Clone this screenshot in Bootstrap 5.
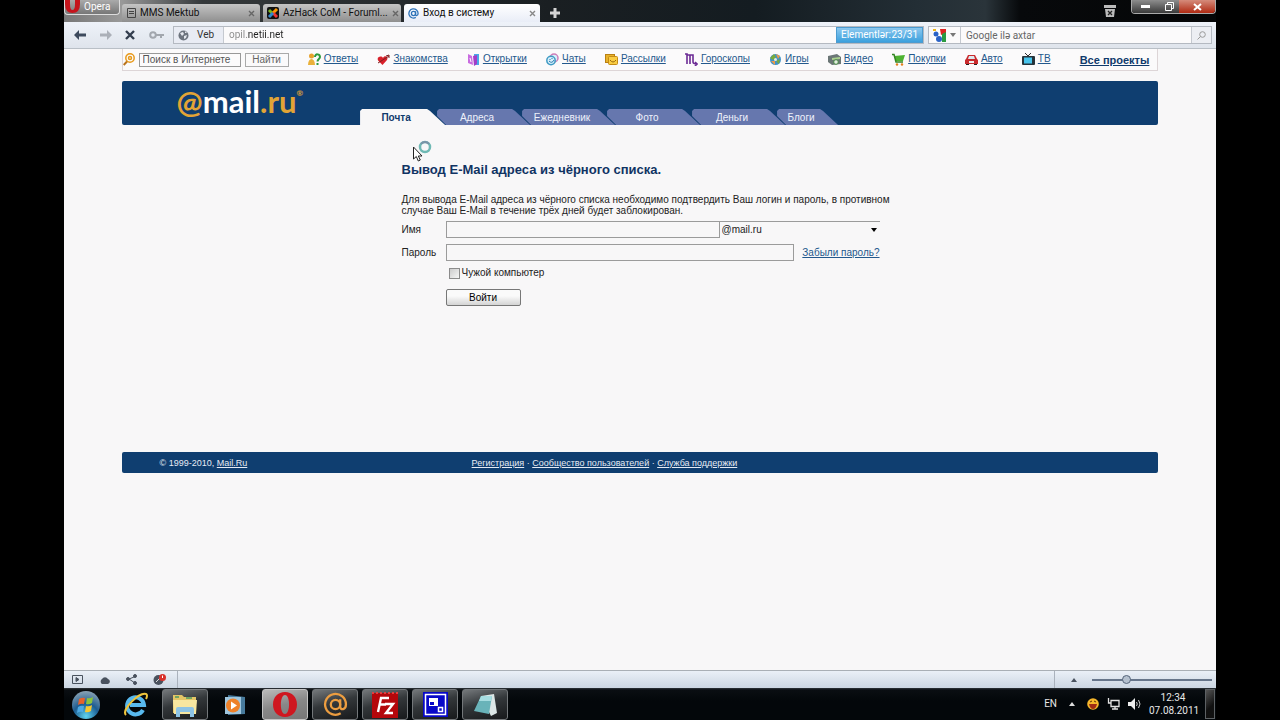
<!DOCTYPE html>
<html lang="ru">
<head>
<meta charset="utf-8">
<meta name="viewport" content="width=device-width, initial-scale=1">
<title>Вход в систему</title>
<link href="https://cdn.jsdelivr.net/npm/bootstrap@5.3.0/dist/css/bootstrap.min.css" rel="stylesheet">
<style>
body{background:#000;font-family:"Liberation Sans",Arial,sans-serif;font-size:10px;line-height:12px;color:#222;padding:0 5%}
svg{display:block;flex:none}
button{font:inherit;padding:0;border:0;background:none}
input,select{font:inherit;min-width:0;border-radius:0}
.chrome-ui{font-family:Roboto,"Noto Sans",sans-serif}
/* tab strip */
.strip{height:22px;background:linear-gradient(90deg,#777 0,#999 5%,#35393b 12%,#1a1f22 42%,#141c21 60%,#232e35 74%,#2a343a 80%,#07090b 83%,#050607);gap:3px}
.opera-btn{width:56px;height:15px;background:linear-gradient(#aaa,#777);border:1px solid #ddd;border-top:0;border-radius:0 0 4px 4px;color:#fff;align-self:flex-start;margin-right:-1px}
.wtab{width:138px;height:18px;background:linear-gradient(#c4c4c4,#8f8f8f);border-radius:3px 3px 0 0;padding:0 5px;color:#111}
.wtab.on{width:136px;background:linear-gradient(#fff,#e9edf7)}
.plus{padding:4px 4px 4px 7px}
.winctl{height:14px;border:1px solid #aaa;border-top:0;border-radius:0 0 4px 4px;overflow:hidden}
.winctl button{width:27px;background:linear-gradient(#8d8d8d,#3a3a3a);color:#fff}
.winctl .shut{width:36px;background:linear-gradient(#d58b7b,#b02a12)}
.winctl .restore{width:20px}
/* address bar */
.addr{height:27px;background:linear-gradient(#eef2f9,#dfe4ec);border-bottom:1px solid #b9bfc6}
.navs{width:109px;padding:0 9px 0 10px}
.field{height:18px;border:1px solid #b4b9c1;background:#fbfafb}
.veb{width:50px;background:#e9ecf4;border-right:1px solid #c5c9d0;color:#333}
.url{border:0;outline:0;padding:0 5px;background:linear-gradient(90deg,#8a8a8a 24px,#222 24px);-webkit-background-clip:text;background-clip:text;color:transparent}
.elem{width:87px;background:linear-gradient(#8cc8ef,#3ba0dd);border:1px solid #4b9bd0;color:#fff}
.finder{width:284px}
.finder input{border:0;border-left:1px solid #c5c9d0;background:transparent;outline:0;padding:0 5px}
.finder input::placeholder{color:#666;opacity:1}
.go{width:20px;background:#eceef3;border-left:1px solid #c5c9d0}
/* page */
.sheet{background:#f8f7f8;padding:0 5%}
.portal{height:22px;background:#fbfafb;border:1px solid #ddd5d7;border-top:0;padding:0 8px 0 0}
.portal a,.forgot{color:#23588c;text-decoration:underline}
.portal .gap-1{gap:3px!important}
.portal .all{color:#103a6c;margin-left:10px;font-size:11px}
.find-in{width:102px;height:14px;border:1px solid #999;background:#fcfbfc;padding:0 3px}
.find-in::placeholder{color:#555;opacity:1}
.find-btn{width:44px;height:14px;border:1px solid #aaa;color:#666;line-height:12px}
.top{height:44px;background:#0f3e70;border-radius:2px;margin-top:10px}
.brand{width:23%;padding-left:55px;font-family:Lato,sans-serif;font-size:31px;line-height:41px;font-weight:700;color:#fff;text-decoration:none}
.brand span{color:#e2a436}
.brand sup{font-size:8px;top:-17px;color:#e2a436}
.ptab{width:93px;height:16px;margin-right:-8px;padding-right:13px;background:#6677ae;color:#eef1fb;text-decoration:none;text-align:center;line-height:17px;clip-path:polygon(2px 0,calc(100% - 18px) 0,calc(100% - 15px) 2px,100% 100%,9px 100%,0 7px,0 2px)}
.ptab.on{width:85px;background:#f8f7f8;color:#103a6c;font-weight:700;clip-path:polygon(2px 0,calc(100% - 18px) 0,calc(100% - 15px) 2px,100% 100%,0 100%,0 2px)}
.ptab.last{width:61px}
.content{margin-left:27%;width:478px;max-width:73%;padding-top:37px}
h1{font-size:13px;line-height:16px;font-weight:700;color:#103363;margin:0 0 16px}
.pointer{left:10px;top:-22px}
.note{line-height:11px;margin:0 0 5px;white-space:nowrap}
.line{margin-bottom:6px}
.lab{width:44px}
.tin{height:17px;border:1px solid #9b9b9b;background:transparent}
.dom{width:160px;height:17px;border:0;border-top:1px solid #9b9b9b;appearance:none;color:#222;padding:0 2px;background:transparent url("data:image/svg+xml,%3Csvg xmlns='http://www.w3.org/2000/svg' width='6' height='4'%3E%3Cpath d='M0 0h6L3 4z'/%3E%3C/svg%3E") no-repeat right 3px center}
.chk{appearance:none;width:11px;height:11px;border:1px solid #8b8b8b;background:linear-gradient(135deg,#ccc,#f6f6f6);margin:0 2px 0 47px}
.enter{width:75px;height:17px;margin:10px 0 0 44px;border:1px solid #777;border-radius:2px;background:linear-gradient(#fafafa 40%,#d4d4d4)}
.foot{height:21px;background:#0f3e70;border-radius:2px;color:#e6ebf4;margin-top:146px;font-size:9px}
.foot a{color:inherit}
.foot .copy{width:350px;padding-left:38px}
/* status bar and taskbar */
.status{height:18px;background:linear-gradient(#eaf0f7,#ccd6e2);border-top:1px solid #a9afb5}
.status .tools{width:114px;gap:15px;padding-left:7px;border-right:1px solid #aab2bc}
.zoomer{width:162px;border-left:1px solid #aab2bc}
.zoomer input{appearance:none;width:120px;height:2px;background:#66758a}
.zoomer input::-webkit-slider-thumb{appearance:none;width:9px;height:9px;border-radius:50%;border:1px solid #56657a;background:#b4c0ce}
.task{height:32px;background:linear-gradient(#30363b 0,#0a0e12 2px,#03070a 40%);color:#e8e8e8;gap:4px}
.tb{width:46px;height:31px;border-radius:3px}
.tb.start{width:44px}
.tb.open{border:1px solid #73777a;background:linear-gradient(165deg,#75797c,#33373a 45%,#17191b)}
.tb.now{border:1px solid #c4c4c4;background:linear-gradient(165deg,#bbb,#888 50%,#777)}
.clock{width:48px;text-align:center;line-height:13px}
.desk{width:10px;height:30px;border:1px solid #5d6164;background:linear-gradient(135deg,#555,#111 60%);margin-right:1px}
</style>
</head>
<body class="d-flex flex-column min-vh-100">
<header class="chrome-ui">
  <div class="strip d-flex align-items-end">
    <button class="opera-btn d-flex align-items-center gap-1">
      <svg width="15" height="14" viewBox="0 0 15 14"><path fill="#c5141c" fill-rule="evenodd" d="M0-6h15v10q0 9-7.500 9T0 4zM5-6v10q0 6 2.500 6T10 4V-6z"/></svg>Opera</button>
    <div class="wtab d-flex align-items-center gap-1"><svg width="9" height="10" viewBox="0 0 9 10" fill="none" stroke="#444"><path d="M.5.5h8v9h-8zM2 3.500h5M2 5.500h5"/></svg><span class="flex-fill">MMS Mektub</span><svg width="7" height="7" viewBox="0 0 7 7" stroke="#666" stroke-width="1.400"><path d="M1 1l5 5M6 1L1 6"/></svg></div>
    <div class="wtab d-flex align-items-center gap-1 px-1"><svg width="12" height="12" viewBox="0 0 12 12"><rect width="12" height="12" rx="2" fill="#111"/><path d="M2 3l3 3" stroke="#7ab51d" stroke-width="3"/><path d="M10 2L6 6" stroke="#f90" stroke-width="3"/><path d="M6 6l4 4" stroke="#e33" stroke-width="3"/><path d="M6 6l-4 4" stroke="#38c" stroke-width="3"/></svg><span class="flex-fill text-nowrap">AzHack CoM - Foruml...</span><svg width="7" height="7" viewBox="0 0 7 7" stroke="#666" stroke-width="1.400"><path d="M1 1l5 5M6 1L1 6"/></svg></div>
    <div class="wtab on d-flex align-items-center gap-1 px-1"><svg width="11" height="11" viewBox="0 0 24 24" fill="none" stroke="#2d72b8" stroke-width="2.800"><circle cx="12" cy="12" r="4.500"/><path d="M16.500 7v7c0 4 5.500 3 5.500-2a10 10 0 1 0-5 8.500"/></svg><span class="flex-fill">Вход в систему</span><svg width="7" height="7" viewBox="0 0 7 7" stroke="#888" stroke-width="1.400"><path d="M1 1l5 5M6 1L1 6"/></svg></div>
    <button class="plus" aria-label="Новая вкладка"><svg width="10" height="10" viewBox="0 0 10 10"><path d="M3.500 0h3v3.500H10v3H6.500V10h-3V6.500H0v-3h3.500z" fill="#d4d4d4"/></svg></button>
    <button class="ms-auto align-self-center me-2 pe-1" aria-label="Закрытые вкладки"><svg width="12" height="12" viewBox="0 0 12 12"><path d="M0 0h12v3H0zM1 4h10l-1 8H2z" fill="#bbb"/><path d="M4 6l4 4M8 6l-4 4" stroke="#222" stroke-width="1.300"/></svg></button>
    <div class="winctl d-flex align-self-start">
      <button class="d-flex align-items-center justify-content-center" aria-label="Свернуть"><svg width="9" height="3"><path d="M0 0h9v3H0z" fill="#fff"/></svg></button>
      <button class="restore d-flex align-items-center justify-content-center" aria-label="Восстановить"><svg width="9" height="9" fill="none" stroke="#fff"><path d="M2.500 2.500v-2h6v6h-2M.5 2.500h6v6h-6z"/></svg></button>
      <button class="shut d-flex align-items-center justify-content-center" aria-label="Закрыть"><svg width="9" height="8" stroke="#fff" stroke-width="2"><path d="M1 1l7 6M8 1L1 7"/></svg></button>
    </div>
  </div>
  <div class="addr d-flex align-items-center pe-1">
    <div class="navs d-flex align-items-center justify-content-between">
      <button aria-label="Назад"><svg width="12" height="10" viewBox="0 0 12 10"><path d="M0 5l5-5v3.500h7v3H5V10z" fill="#3d4a5d"/></svg></button>
      <button aria-label="Вперёд"><svg width="12" height="10" viewBox="0 0 12 10"><path d="M12 5L7 0v3.500H0v3h7V10z" fill="#abb0b8"/></svg></button>
      <button aria-label="Стоп"><svg width="10" height="10" viewBox="0 0 10 10" stroke="#333e4e" stroke-width="2.400"><path d="M1 1l8 8M9 1L1 9"/></svg></button>
      <button aria-label="Пароли"><svg width="15" height="8" viewBox="0 0 15 8" fill="none" stroke="#a2a7ae" stroke-width="2"><circle cx="4" cy="4" r="2.800"/><path d="M7 4h8M12 4v3"/></svg></button>
    </div>
    <div class="field d-flex flex-fill me-1">
      <button class="veb d-flex align-items-center gap-2 ps-1"><svg width="11" height="11" viewBox="0 0 11 11"><circle cx="5.500" cy="5.500" r="5" fill="#6d747e"/><path d="M2 3l3-1 1 2-2 2zM6 6l3-1-1 3-2 1zM7 1l2 2-2 0z" fill="#e5e8ee"/></svg>Veb</button>
      <input class="url flex-fill" aria-label="Адрес" value="opil.netii.net">
      <div class="elem d-flex justify-content-between align-items-center ps-1 pe-1"><span>Elementlər:</span><span>23/31</span></div>
    </div>
    <div class="field finder d-flex align-items-center">
      <button class="d-flex align-items-center px-1 gap-1" aria-label="Поисковая система"><svg width="13" height="13" viewBox="0 0 13 13"><path fill="#fff" d="M0 0h13v13H0z"/><path d="M7 0h6v4L8 6z" fill="#d22"/><path d="M9 5l4-2v10H9z" fill="#2a9a41"/><circle cx="3" cy="5" r="2.500" fill="#2b63c6"/><circle cx="6" cy="10" r="3" fill="#2b63c6"/><path d="M0 0h3v2H0z" fill="#ecb41a"/></svg><svg width="6" height="4"><path d="M0 0h6L3 4z" fill="#777"/></svg></button>
      <input class="flex-fill h-100" placeholder="Google ilə axtar" aria-label="Google">
      <button class="go h-100 d-flex align-items-center justify-content-center" aria-label="Искать"><svg width="9" height="9" viewBox="0 0 9 9" fill="none" stroke="#999"><circle cx="5.500" cy="3.500" r="2.800"/><path d="M3.500 5.500L.5 8.500"/></svg></button>
    </div>
  </div>
</header>

<main class="sheet flex-fill">
  <nav class="portal d-flex align-items-center justify-content-between">
    <form class="d-flex align-items-center">
      <svg class="me-1" width="12" height="13" viewBox="0 0 12 13" fill="none" stroke="#e89a1c" stroke-width="1.500"><circle cx="7" cy="5" r="4.200"/><circle cx="7" cy="5" r="1.500"/><path d="M4 8.500L.7 12" stroke="#b9731c" stroke-width="2"/></svg>
      <input class="find-in me-1" placeholder="Поиск в Интернете" aria-label="Поиск в Интернете"><button type="button" class="find-btn">Найти</button>
    </form>
    <div class="d-flex gap-1"><svg width="13" height="13" viewBox="0 0 13 13"><circle cx="3.500" cy="3" r="2.500" fill="#e7a22c"/><path d="M0 12c0-8 7-8 7 0z" fill="#e9b13a"/><path d="M7 4c0-4 5-3 5 0 0 2-2.500 2-2.500 4.500M9.500 10v2" fill="none" stroke="#2d9a3b" stroke-width="2"/></svg><a href="#">Ответы</a></div>
    <div class="d-flex gap-1"><svg width="13" height="13" viewBox="0 0 13 13"><path d="M5.500 12L1.500 8c-3-4 3-6 4.500-3 1-3 6-2 4 2z" fill="#d8202a"/><path d="M1 10l11-7M9 3l3-1v3" fill="none" stroke="#7c2020"/></svg><a href="#">Знакомства</a></div>
    <div class="d-flex gap-1"><svg width="13" height="13" viewBox="0 0 13 13"><path d="M7 1h5v11H7z" fill="#49a9e8"/><path d="M1 1l4 2 1 9-5-2z" fill="#c96be0"/><path d="M6 3l4-1v9l-3 2z" fill="#a33dc7"/><path d="M3 5l1 4" stroke="#fff"/></svg><a href="#">Открытки</a></div>
    <div class="d-flex gap-1"><svg width="13" height="13" viewBox="0 0 13 13" fill="#d8effa"><circle cx="8" cy="5" r="4" stroke="#cf7db8" stroke-width="1.500"/><circle cx="5" cy="7.500" r="4.200" stroke="#3f9ac4" stroke-width="1.500"/><path d="M3 8q3 3 5-1M4 6v1M6 5v1" fill="none" stroke="#277bb0"/></svg><a href="#">Чаты</a></div>
    <div class="d-flex gap-1"><svg width="13" height="13" viewBox="0 0 13 13"><rect x=".5" y="1.500" width="9" height="8" fill="#e8b22a" stroke="#b98014"/><rect x="3.500" y="3.500" width="9" height="8" rx="1" fill="#f9cc43" stroke="#c48a16"/><path d="M5 7q3 4 6 0" fill="none" stroke="#9b6a0f"/></svg><a href="#">Рассылки</a></div>
    <div class="d-flex gap-1"><svg width="13" height="13" viewBox="0 0 13 13" fill="none" stroke="#6b2a94" stroke-width="1.600"><path d="M0 1h2v10M2 2h3v9M5 2h3v7q0 2 4 2M10 9l2 2-2 2"/></svg><a href="#">Гороскопы</a></div>
    <div class="d-flex gap-1"><svg width="13" height="13" viewBox="0 0 13 13"><circle cx="6.500" cy="6.500" r="5.500" fill="#3f93c9"/><path d="M1 5l4-4 2 3-3 3zM7 8l4-2-1 5z" fill="#79ab3c"/><path d="M7 1l4 2-2 3zM2 8l4 0 0 4z" fill="#ec9b48"/><circle cx="6.500" cy="6.500" r="1.500" fill="#e8eddf"/></svg><a href="#">Игры</a></div>
    <div class="d-flex gap-1"><svg width="13" height="13" viewBox="0 0 13 13"><path d="M0 3l9-2 4 3v7l-9 1-4-3z" fill="#6b7676"/><path d="M4 5l8-1v2l-8 1z" fill="#a9d08e"/><circle cx="8" cy="9" r="2.300" fill="#e3eee0" stroke="#478b45"/></svg><a href="#">Видео</a></div>
    <div class="d-flex gap-1"><svg width="13" height="13" viewBox="0 0 13 13"><path d="M2 3l11-1-2 6H4z" fill="#4eb331"/><path d="M0 1.500h2L4 9h7" fill="none" stroke="#348423" stroke-width="1.500"/><circle cx="5" cy="11.500" r="1.200" fill="#e47f1a"/><circle cx="10" cy="11.500" r="1.200" fill="#e47f1a"/></svg><a href="#">Покупки</a></div>
    <div class="d-flex gap-1"><svg width="13" height="13" viewBox="0 0 13 13"><path d="M3 2h7l2 4 1 1v4H0V7l1-1z" fill="#c92a2d"/><path d="M4 3h5l1 3H3z" fill="#dce9ef"/><path d="M1 11h3v1H1zM9 11h3v1H9z" fill="#222"/><path d="M4 8h5v2H4z" fill="#eee"/></svg><a href="#">Авто</a></div>
    <div class="d-flex gap-1"><svg width="13" height="13" viewBox="0 0 13 13"><path d="M3 0l3 3 3-3" fill="none" stroke="#333"/><rect y="3" width="13" height="9" rx="1" fill="#26333a"/><path d="M2 4.500h8v6H2z" fill="#48c4ec"/></svg><a href="#">ТВ</a></div>
    <a href="#" class="all fw-bold">Все проекты</a>
  </nav>

  <div class="top d-flex align-items-end">
    <a href="#" class="brand text-nowrap align-self-start"><span>@</span>mail<span>.ru</span><sup>®</sup></a>
    <nav class="d-flex">
      <a href="#" class="ptab on">Почта</a><a href="#" class="ptab">Адреса</a><a href="#" class="ptab">Ежедневник</a><a href="#" class="ptab">Фото</a><a href="#" class="ptab">Деньги</a><a href="#" class="ptab last">Блоги</a>
    </nav>
  </div>

  <form class="content">
    <h1 class="position-relative">Вывод E-Mail адреса из чёрного списка.
      <svg class="pointer position-absolute" width="22" height="24" viewBox="0 0 22 24"><circle cx="13" cy="7" r="5" fill="none" stroke="#6fb9b4" stroke-width="2.500"/><path d="M9 4a5 5 0 0 1 8 0" fill="none" stroke="#7b93a8" stroke-width="2"/><path d="M1.500 7v12l2.800-2.500 2 4.500 2-1-2-4h3.700z" fill="#fff" stroke="#222"/></svg>
    </h1>
    <p class="note">Для вывода E-Mail адреса из чёрного списка необходимо подтвердить Ваш логин и пароль, в противном<br>случае Ваш E-Mail в течение трёх дней будет заблокирован.</p>
    <div class="line d-flex align-items-center">
      <label class="lab" for="nm">Имя</label><input id="nm" class="tin flex-fill" type="text"><select class="dom" aria-label="Домен"><option>@mail.ru</option></select>
    </div>
    <div class="line d-flex align-items-center">
      <label class="lab" for="pw">Пароль</label><input id="pw" class="tin flex-fill" type="password"><a href="#" class="forgot ps-2">Забыли пароль?</a>
    </div>
    <div class="d-flex align-items-center"><input class="chk" type="checkbox" id="alien"><label for="alien">Чужой компьютер</label></div>
    <button type="button" class="enter d-block">Войти</button>
  </form>

  <footer class="foot d-flex align-items-center">
    <div class="copy">© 1999-2010, <a href="#">Mail.Ru</a></div>
    <div><a href="#">Регистрация</a> · <a href="#">Сообщество пользователей</a> · <a href="#">Служба поддержки</a></div>
  </footer>
</main>

<div class="chrome-ui">
  <div class="status d-flex justify-content-between">
    <div class="tools d-flex align-items-center">
      <button aria-label="Панели"><svg width="13" height="11" fill="none" stroke="#49525e"><path d="M1.500 1.500h10v8h-10z"/><path d="M5 3.500l3 2-3 2z" fill="#49525e"/></svg></button>
      <button aria-label="Opera Link"><svg width="12" height="8"><path d="M3 8a3 3 0 0 1 0-5 3.500 3.500 0 0 1 6 0 2.600 2.600 0 0 1 0 5z" fill="#49525e"/></svg></button>
      <button aria-label="Opera Unite"><svg width="12" height="11" fill="#49525e" stroke="#49525e"><path d="M3 5l5-2M3 5l6 4" /><circle cx="2" cy="5" r="1.500"/><circle cx="9" cy="2" r="1.500"/><circle cx="9" cy="9" r="1.500"/></svg></button>
      <button aria-label="Opera Turbo"><svg width="13" height="11"><circle cx="5.500" cy="6" r="5" fill="#49525e"/><path d="M3 8l4-4" stroke="#ddd"/><circle cx="9.500" cy="3.500" r="3.500" fill="#d8322c"/><path d="M9.500 1.500v2.500" stroke="#fff"/></svg></button>
    </div>
    <div class="zoomer d-flex align-items-center justify-content-between ps-3 pe-1"><svg width="6" height="4"><path d="M0 4h6L3 0z" fill="#49525e"/></svg><input type="range" min="0" max="100" value="27" aria-label="Масштаб"></div>
  </div>
  <div class="task d-flex align-items-end">
    <button class="tb start d-flex align-items-center justify-content-center" aria-label="Пуск"><svg width="32" height="30" viewBox="0 0 32 30"><defs><radialGradient id="orb" cx="50%" cy="90%" r="90%"><stop offset="0" stop-color="#5fd4ef"/><stop offset=".5" stop-color="#1c5c91"/><stop offset="1" stop-color="#8ba3b5"/></radialGradient></defs><circle cx="16" cy="15" r="14" fill="url(#orb)"/><path d="M9 9q3-2 6-1l-1 6q-3-1-6 1z" fill="#e8622b"/><path d="M17 8q3 1 6-1l-1 6q-3 2-6 1z" fill="#8cc43c"/><path d="M8 17q3-2 6-1l-1 6q-3-1-6 1z" fill="#4ea9e4"/><path d="M16 16q3 1 6-1l-1 6q-3 2-6 1z" fill="#f8c832"/></svg></button>
    <button class="tb d-flex align-items-center justify-content-center" aria-label="Internet Explorer"><svg width="25" height="25" viewBox="0 0 25 25" fill="none"><path d="M20 18a8.500 8.500 0 1 1 1-5H7" stroke="#58b9ee" stroke-width="4"/><path d="M3 23C-2 18 16 0 23 2q2 1 0 5" stroke="#eec43b" stroke-width="2"/></svg></button>
    <button class="tb open d-flex align-items-center justify-content-center" aria-label="Проводник"><svg width="28" height="26" viewBox="0 0 28 26"><path d="M2 3h9l2 2h12v16H2z" fill="#e4c566"/><path d="M2 8h24l-1 14H3z" fill="#f7e6a0"/><path d="M5 25v-8q0-2 2-2h14q2 0 2 2v8h-4v-5H9v5z" fill="#8dc3e5"/><path d="M4 5h4M15 6h6" stroke="#4c9960" stroke-width="1.500"/></svg></button>
    <button class="tb d-flex align-items-center justify-content-center" aria-label="Windows Media Player"><svg width="22" height="22" viewBox="0 0 22 22"><path d="M4 1l17 2v17L4 21z" fill="#477a9c"/><path d="M1 3h16v17H1z" fill="#9fc6de"/><circle cx="9" cy="11.500" r="7" fill="#ee8129"/><path d="M7 7.500l6 4-6 4z" fill="#fff"/></svg></button>
    <button class="tb now d-flex align-items-center justify-content-center" aria-label="Opera"><svg width="24" height="25" viewBox="0 0 24 25"><path fill="#cf1720" fill-rule="evenodd" d="M12 0c7 0 12 5 12 12.500S19 25 12 25 0 20 0 12.500 5 0 12 0zm0 3C6.500 3 6.500 22 12 22s5.500-19 0-19z"/></svg></button>
    <button class="tb open d-flex align-items-center justify-content-center" aria-label="Mail.Ru Агент"><svg width="25" height="25" viewBox="0 0 24 24" fill="none" stroke="#ec9d40" stroke-width="2.200"><circle cx="12" cy="12" r="4.500"/><path d="M16.500 7v7c0 4 5.500 3 5.500-2a10 10 0 1 0-5 8.500"/></svg></button>
    <button class="tb open d-flex align-items-center justify-content-center" aria-label="FileZilla"><svg width="26" height="26" viewBox="0 0 26 26"><path d="M0 1h26v25H0z" fill="#b4070b"/><path d="M0 1h26" stroke="#e04040" stroke-dasharray="2 2" stroke-width="2"/><path d="M6 20L9 6h8M8 12.500h6M13 12h8l-7 9h7" fill="none" stroke="#fff" stroke-width="2.400"/></svg></button>
    <button class="tb open d-flex align-items-center justify-content-center" aria-label="Удалённый доступ"><svg width="25" height="25" viewBox="0 0 25 25"><path d="M0 0h25v25H0z" fill="#0808c8"/><path d="M2.500 2.500h20v20h-20zM15.500 15.500h4v4h-4z" fill="none" stroke="#fff" stroke-width="1.500"/><path d="M6 6h9v8H6z" fill="#fff"/><path d="M7 10h4v3H7z" fill="#0808c8"/></svg></button>
    <button class="tb open d-flex align-items-center justify-content-center" aria-label="Блокнот"><svg width="25" height="24" viewBox="0 0 25 24"><path d="M8 3l13-2 3 19-6 3z" fill="#dce6e6"/><path d="M8 3l11 0-3 18-15-3z" fill="#69b3b9"/><path d="M8 3l11 0-1 5-12 0z" fill="#a6dce0"/></svg></button>
    <div class="ms-auto h-100 d-flex align-items-center gap-2">
      <span class="pe-1">EN</span>
      <svg width="6" height="4"><path d="M0 4h6L3 0z" fill="#ddd"/></svg>
      <svg class="ms-1" width="12" height="12"><circle cx="6" cy="6" r="5.800" fill="#f6b72c"/><path d="M2 6h8q-1 5-4 5T2 6z" fill="#a02a14"/><path d="M3 4l2-1M7 3l2 1" stroke="#5a3000"/></svg>
      <svg width="13" height="12" fill="none" stroke="#e4e4e4" stroke-width="1.300"><path d="M4 2.500h8v6H4zM5 11h6M1.500 0v5h3M8 8v3"/></svg>
      <svg width="13" height="12"><path d="M0 4h3l4-4v12L3 8H0z" fill="#eee"/><path d="M8.500 4q1.500 2 0 4M10.500 2q3 4 0 8" fill="none" stroke="#ccc"/></svg>
      <div class="clock">12:34<br>07.08.2011</div>
      <button class="desk" aria-label="Свернуть все окна"></button>
    </div>
  </div>
</div>
<script src="https://cdn.jsdelivr.net/npm/bootstrap@5.3.0/dist/js/bootstrap.bundle.min.js"></script>
</body>
</html>
